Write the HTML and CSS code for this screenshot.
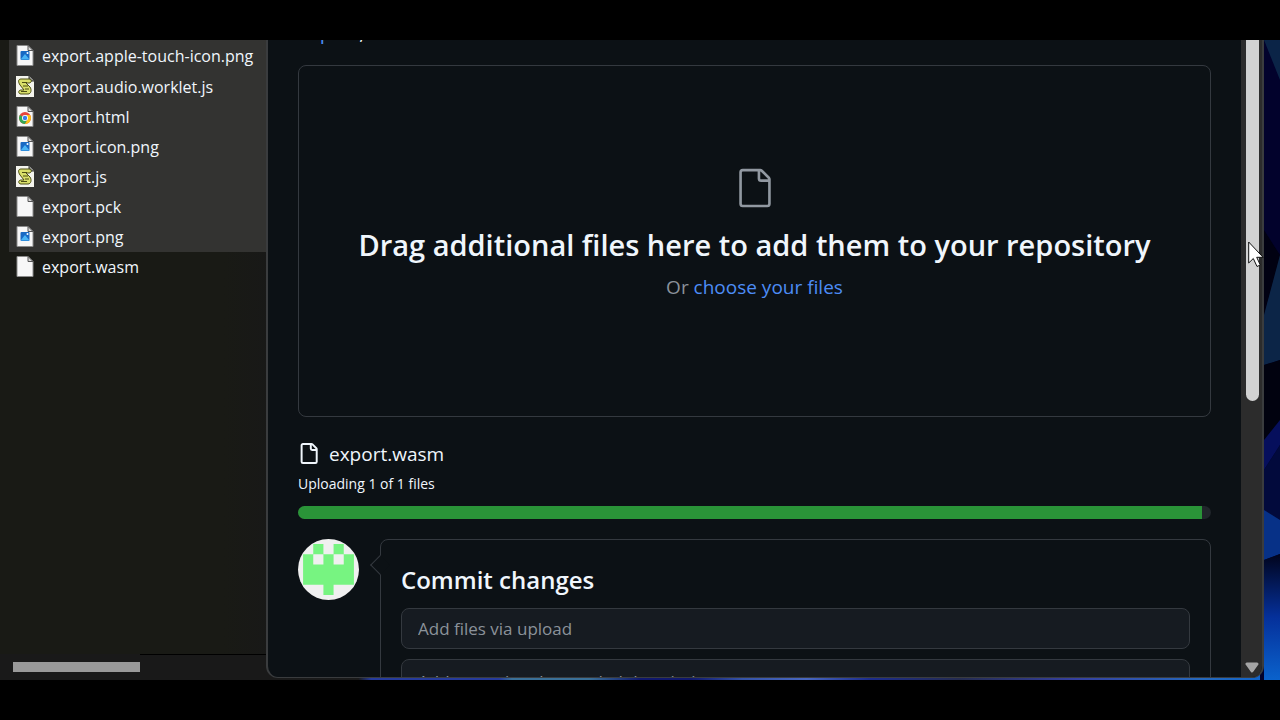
FILE: index.html
```
<!DOCTYPE html>
<html lang="en">
<head>
  <meta charset="UTF-8" />
  <meta name="viewport" content="width=device-width, initial-scale=1.0"/>
  <title>Upload files</title>
  <link rel="stylesheet" href="styles.css">
</head>
<body>
  <!-- Shared icons -->
  <svg class="sprite" aria-hidden="true">
    <symbol id="doc" viewBox="0 0 18 21">
      <path d="M1 .5h11l5 5v15H1z" fill="#f7f7f7" stroke="#8b8b8b"/>
      <path d="M12 .5v5h5z" fill="#d8d8d8" stroke="#555"/>
    </symbol>
    <symbol id="image-file" viewBox="0 0 18 21">
      <use href="#doc"/>
      <rect x="4.500" y="6" width="9" height="9" rx="1" fill="#1769c4"/>
      <path d="M5 14l4-5 4.500 5.500H5z" fill="#49b4f5"/>
      <circle cx="11.500" cy="8" r="1" fill="#fff"/>
    </symbol>
    <symbol id="script-file" viewBox="0 0 18 21">
      <path d="M0 0h13l5 5v16H0z" fill="#f5f5ee"/>
      <path d="M13 0v5h5" fill="#888" stroke="#333"/>
      <path d="M5 3h8c3 0 3 4 0 4h-3l4 4c2 3 1 7-2 7H5c-3 0-3-4 0-4h3L4 9C2 6 2 3 5 3z" fill="#d9df6a" stroke="#4a4c12"/>
      <path d="M6 6.500h5M7 10h5M9 13h4M5 15.500h6" stroke="#4a4c12"/>
    </symbol>
    <symbol id="chrome-file" viewBox="0 0 18 21">
      <use href="#doc"/>
      <circle cx="9" cy="12" r="6" fill="#e8453c"/>
      <path d="M9 12L3.800 9A6 6 0 0 0 9 18l2.600-4.500z" fill="#34a853"/>
      <path d="M9 12l2.600 1.500L9 18a6 6 0 0 0 5.200-9H9z" fill="#fbc116"/>
      <circle cx="9" cy="12" r="3" fill="#fff"/>
      <circle cx="9" cy="12" r="2.200" fill="#3b7ded"/>
    </symbol>
  </svg>

  <div class="desktop">
    <svg class="wallpaper" viewBox="0 0 20 640" preserveAspectRatio="none" aria-hidden="true">
      <defs>
        <linearGradient id="glow" x1="0" y1="0" x2="0" y2="1">
          <stop offset="0" stop-color="#01041c"/>
          <stop offset=".5" stop-color="#05309a"/>
          <stop offset="1" stop-color="#0a62cc"/>
        </linearGradient>
      </defs>
      <rect width="20" height="640" fill="#02022c"/>
      <path d="M4 0h16v40z" fill="#0b2447"/>
      <path d="M4 190L20 215v60L4 305z" fill="#010112"/>
      <path d="M20 215L4 275v50l16-5z" fill="#0c2547"/>
      <path d="M4 325l16-5v70L4 405z" fill="#01020f"/>
      <path d="M4 400l16-20v25L4 430z" fill="#060f5c"/>
      <path d="M4 430l16-25v95L4 520z" fill="#020a3c"/>
      <path d="M4 470l16 10v34L4 520z" fill="#073187"/>
      <path d="M4 520l16-6v126H4z" fill="url(#glow)"/>
    </svg>

    <aside class="explorer">
      <ul class="files">
        <li class="file selected"><svg><use href="#image-file"/></svg>export.apple-touch-icon.png</li>
        <li class="file selected"><svg><use href="#script-file"/></svg>export.audio.worklet.js</li>
        <li class="file selected"><svg><use href="#chrome-file"/></svg>export.html</li>
        <li class="file selected"><svg><use href="#image-file"/></svg>export.icon.png</li>
        <li class="file selected"><svg><use href="#script-file"/></svg>export.js</li>
        <li class="file selected"><svg><use href="#doc"/></svg>export.pck</li>
        <li class="file selected"><svg><use href="#image-file"/></svg>export.png</li>
        <li class="file"><svg><use href="#doc"/></svg>export.wasm</li>
      </ul>
      <div class="h-scroll">
        <div class="h-thumb"></div>
        <div class="h-track"></div>
      </div>
    </aside>

    <div class="window">
      <main class="page">
        <nav class="crumbs"><a href="#">export</a>,</nav>

        <section class="dropzone">
          <svg class="drop-icon" viewBox="0 0 24 24" aria-hidden="true"><path d="M3 3a2 2 0 0 1 2-2h9.982a2 2 0 0 1 1.414.586l4.018 4.018A2 2 0 0 1 21 7.018V21a2 2 0 0 1-2 2H5a2 2 0 0 1-2-2Zm2-.5a.5.5 0 0 0-.5.5v18a.5.5 0 0 0 .5.5h14a.5.5 0 0 0 .5-.5V8.500h-4a2 2 0 0 1-2-2v-4Zm10 0v4a.5.5 0 0 0 .5.5h4a.5.5 0 0 0-.146-.336l-4.018-4.018A.5.5 0 0 0 15 2.500Z"/></svg>
          <h1>Drag additional files here to add them to your repository</h1>
          <p>Or <a href="#">choose your files</a></p>
        </section>

        <section class="upload">
          <div class="upload-name">
            <svg viewBox="0 0 16 16" aria-hidden="true"><path d="M2 1.750C2 .784 2.784 0 3.750 0h6.586c.464 0 .909.184 1.237.513l2.914 2.914c.329.328.513.773.513 1.237v9.586A1.750 1.750 0 0 1 13.250 16h-9.500A1.750 1.750 0 0 1 2 14.250Zm1.750-.25a.25.25 0 0 0-.25.25v12.500c0 .138.112.25.25.25h9.500a.25.25 0 0 0 .25-.25V6h-2.750A1.750 1.750 0 0 1 9 4.250V1.500Zm6.750.062V4.250c0 .138.112.25.25.25h2.688l-.011-.013-2.914-2.914-.013-.011Z"/></svg>
            export.wasm
          </div>
          <div class="upload-status">Uploading 1 of 1 files</div>
          <div class="progress"><div class="progress-bar" style="width: 99%"></div></div>
        </section>

        <section class="commit">
          <svg class="avatar" viewBox="0 0 12 12" aria-hidden="true">
            <rect width="12" height="12" fill="#f0f0f0"/>
            <path d="M3 1h2v2h2V1h2v2h2v6H7v2H5V9H1V3h2z" fill="#77f481"/>
            <path d="M3 3h2v2H3zM7 3h2v2H7z" fill="#f0f0f0"/>
          </svg>
          <form class="commit-box">
            <h2>Commit changes</h2>
            <input type="text" placeholder="Add files via upload" aria-label="Commit message">
            <textarea placeholder="Add an optional extended description…" aria-label="Extended description"></textarea>
          </form>
        </section>
      </main>
      <div class="v-scroll">
        <div class="v-thumb"></div>
        <svg viewBox="0 0 14 11" aria-hidden="true"><path d="M2 2h10l-5 7z" fill="#a5a5a5" stroke="#a5a5a5" stroke-width="3" stroke-linejoin="round"/></svg>
      </div>
    </div>

    <svg class="cursor" viewBox="0 0 16 27" aria-hidden="true"><path d="M.7 1v21l4.600-4.500 3.700 8 3.300-1.500-3.600-7.700h6.400z" fill="#fff" stroke="#111"/></svg>
  </div>
</body>
</html>
```

FILE: styles.css
```
* {
  box-sizing: border-box;
}
body {
  margin: 0;
  padding: 40px 0;
  height: 100vh;
  overflow: hidden;
  background-color: #000;
  color: #f0f6fc;
  font-family: 'Open Sans', 'Noto Sans', sans-serif;
}
a {
  color: #4d8df6;
  text-decoration: none;
}
.sprite {
  display: none;
}
.desktop {
  position: relative;
  display: flex;
  height: 100%;
  overflow: hidden;
  background: linear-gradient(90deg, #1a1a1a 28%, #263b9c 29%, #263b9c 39%, #3a7098 40%, #3a7098 46%, #10186c 50%, #10186c 54%, #3553a8 58%, #4867c0 63%, #1c2c8c 68%, #252c50 75%, #3540a0 84%, #2568bc 94%, #0a62cc);
}
.wallpaper {
  position: absolute;
  top: 0;
  right: 0;
  width: 20px;
  height: 100%;
}

/* File explorer */
.explorer {
  display: flex;
  flex-direction: column;
  flex: none;
  width: 280px;
  background: linear-gradient(90deg, #191a15 80%, #181818);
}
.files {
  flex: 1;
  margin: 0;
  padding: 0 0 0 9px;
  list-style: none;
}
.file {
  display: flex;
  align-items: center;
  gap: 8px;
  height: 30px;
  padding-left: 7px;
  font-size: 16px;
  white-space: nowrap;
}
.file:first-child {
  height: 32px;
}
.file.selected {
  background-color: #333331;
}
.file svg {
  width: 18px;
  height: 21px;
  margin-bottom: 2px;
}
.h-scroll {
  display: flex;
  align-items: center;
  height: 26px;
  padding-left: 13px;
  background-color: #191919;
}
.h-thumb {
  width: 127px;
  height: 10px;
  background-color: #999;
}
.h-track {
  flex: 1;
  height: 100%;
  border-top: 1px solid #000;
}

/* Browser window */
.window {
  position: relative;
  display: flex;
  flex: 1;
  min-width: 0;
  margin: 0 16px 2px -14px;
  border: 2px solid #3a3c3e;
  border-top: none;
  border-bottom-width: 1px;
  border-radius: 0 0 12px 12px;
  background-color: #0c1115;
  overflow: hidden;
}
.page {
  flex: 1;
  min-width: 0;
  padding: 0 30px;
  overflow: hidden;
}
.crumbs {
  height: 26px;
  margin: -9px 0 8px;
  font-size: 20px;
  line-height: 2px;
}
.dropzone {
  display: flex;
  flex-direction: column;
  align-items: center;
  justify-content: center;
  height: 352px;
  padding-bottom: 12px;
  border: 1px solid #34393f;
  border-radius: 8px;
  text-align: center;
}
.drop-icon {
  width: 42px;
  height: 42px;
  fill: #9198a1;
}
.dropzone h1 {
  margin: 14px 0 4px;
  font-size: 29px;
  font-weight: 600;
  line-height: 44px;
}
.dropzone p {
  margin: 0;
  color: #8b929a;
  font-size: 19px;
  line-height: 32px;
}
.upload {
  margin-top: 22px;
}
.upload-name {
  display: flex;
  align-items: center;
  gap: 10px;
  height: 30px;
  font-size: 19px;
}
.upload-name svg {
  width: 21px;
  height: 21px;
  margin-bottom: 2px;
  fill: #f0f6fc;
}
.upload-status {
  font-size: 14px;
  line-height: 30px;
}
.progress {
  height: 13px;
  margin-top: 7px;
  border-radius: 7px;
  background-color: #21262b;
  overflow: hidden;
}
.progress-bar {
  height: 100%;
  background-color: #2a9438;
}
.commit {
  display: flex;
  align-items: flex-start;
  gap: 21px;
  margin-top: 20px;
}
.avatar {
  flex: none;
  width: 61px;
  height: 61px;
  border-radius: 50%;
}
.commit-box {
  position: relative;
  flex: 1;
  padding: 20px;
  border: 1px solid #34393f;
  border-radius: 8px;
}
.commit-box::before {
  content: "";
  position: absolute;
  top: 18px;
  left: -8px;
  width: 13px;
  height: 13px;
  border: 1px solid #34393f;
  border-width: 0 0 1px 1px;
  background-color: #0c1115;
  transform: rotate(45deg);
}
.commit-box h2 {
  margin: 0 0 8px;
  font-size: 24px;
  font-weight: 600;
  line-height: 40px;
}
.commit-box input,
.commit-box textarea {
  display: block;
  width: 100%;
  height: 41px;
  padding: 0 16px;
  border: 1px solid #34393f;
  border-radius: 8px;
  background-color: #161b21;
  color: #f0f6fc;
  font-family: inherit;
  font-size: 17px;
}
.commit-box textarea {
  height: 130px;
  margin-top: 10px;
  padding-top: 10px;
  resize: none;
}
.commit-box ::placeholder {
  color: #8b929a;
  opacity: 1;
}
.v-scroll {
  display: flex;
  flex-direction: column;
  justify-content: space-between;
  align-items: center;
  width: 21px;
  padding: 0 0 4px 1px;
  background-color: #2c2c2c;
}
.v-thumb {
  width: 13px;
  height: 361px;
  border-radius: 0 0 7px 7px;
  background-color: #d2d2d2;
}
.v-scroll svg {
  width: 14px;
  height: 11px;
}
.cursor {
  position: absolute;
  top: 201px;
  right: 16px;
  width: 16px;
  height: 27px;
}
```
